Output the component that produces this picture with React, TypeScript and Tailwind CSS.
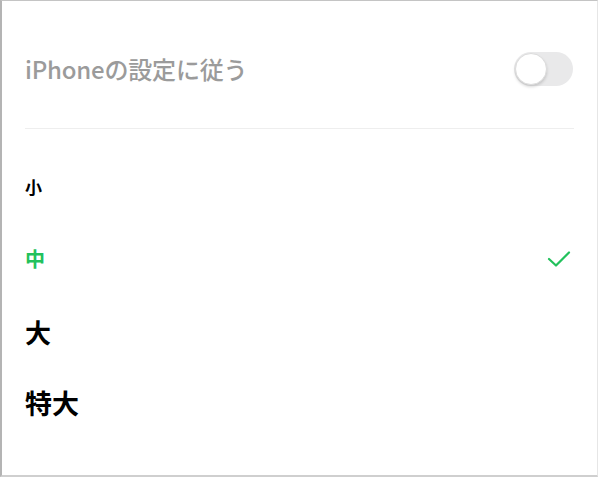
import React from "react";

const options = [
  { label: "小", size: "text-[17px]" },
  { label: "中", size: "text-[20px]" },
  { label: "大", size: "text-[26px]" },
  { label: "特大", size: "text-[27px]" },
];

const App: React.FC = () => {
  const selected = "中";

  return (
    <div className="w-[600px] h-[477px] bg-white">
      <div
        className="w-[598px] h-[477px] border-l-2 border-t border-b-2 border-r border-l-[#b4b4b4] border-t-[#c4c4c4] border-b-[#cfcfcf] border-r-[#e6e6e6] px-[23px]"
        style={{ fontFamily: '"Noto Sans CJK JP", "Noto Sans", sans-serif' }}
      >
        {/* Follow iPhone setting */}
        <div className="flex items-center justify-between h-[127px] pt-[9px]">
          <span className="text-[24px] font-medium text-[#9b9b9b] tracking-[-0.2px]">
            iPhoneの設定に従う
          </span>
          <div className="w-[59px] h-[34px] rounded-full bg-[#e9e9ea] p-[1px] mr-[1px]">
            <div className="w-[32px] h-[32px] rounded-full bg-white border border-[#dcdcdc] shadow-[0_2px_3px_rgba(0,0,0,0.15)]" />
          </div>
        </div>
        <div className="h-px bg-[#eeeeee]" />

        {/* Font size options */}
        <div className="pt-[22px]">
          {options.map((o) => {
            const active = o.label === selected;
            return (
              <div key={o.label} className="flex items-center justify-between h-[72px]">
                <span
                  className={`${o.size} font-semibold ${active ? "text-[#22c15c]" : "text-black"}`}
                >
                  {o.label}
                </span>
                {active && (
                  <svg width="24" height="18" viewBox="0 0 24 18" className="mr-[3px]">
                    <path
                      d="M2 9 L9 15.5 L22 2.5"
                      fill="none"
                      stroke="#22c15c"
                      strokeWidth="2.2"
                      strokeLinecap="round"
                      strokeLinejoin="round"
                    />
                  </svg>
                )}
              </div>
            );
          })}
        </div>
      </div>
    </div>
  );
};

export default App;
